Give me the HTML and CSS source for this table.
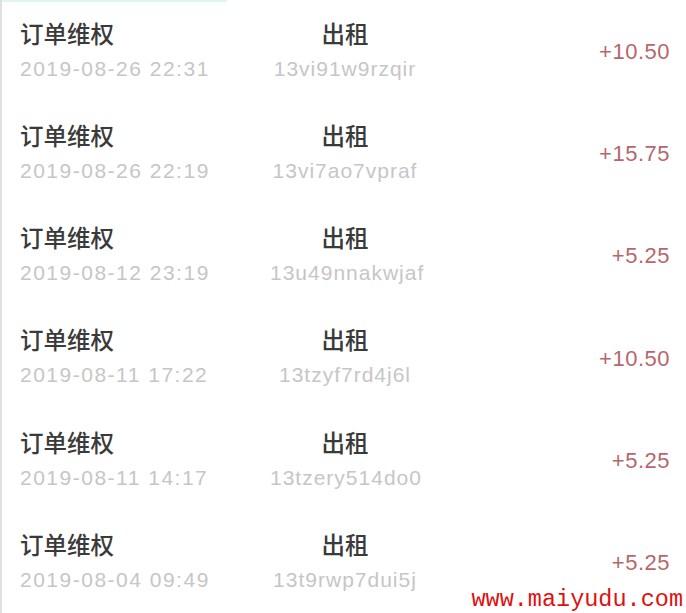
FILE: index.html
```html
<!DOCTYPE html>
<html lang="zh">
<head>
<meta charset="utf-8">
<link rel="stylesheet" href="styles.css">
</head>
<body>
<div class="page">
  <div class="topline"></div>
  <div class="row">
    <div class="left"><div class="title">订单维权</div><div class="date">2019-08-26 22:31</div></div>
    <div class="mid"><div class="title">出租</div><div class="date code">13vi91w9rzqir</div></div>
    <div class="amount">+10.50</div>
  </div>
  <div class="row">
    <div class="left"><div class="title">订单维权</div><div class="date">2019-08-26 22:19</div></div>
    <div class="mid"><div class="title">出租</div><div class="date code">13vi7ao7vpraf</div></div>
    <div class="amount">+15.75</div>
  </div>
  <div class="row">
    <div class="left"><div class="title">订单维权</div><div class="date">2019-08-12 23:19</div></div>
    <div class="mid"><div class="title">出租</div><div class="date code">13u49nnakwjaf</div></div>
    <div class="amount">+5.25</div>
  </div>
  <div class="row">
    <div class="left"><div class="title">订单维权</div><div class="date">2019-08-11 17:22</div></div>
    <div class="mid"><div class="title">出租</div><div class="date code">13tzyf7rd4j6l</div></div>
    <div class="amount">+10.50</div>
  </div>
  <div class="row">
    <div class="left"><div class="title">订单维权</div><div class="date">2019-08-11 14:17</div></div>
    <div class="mid"><div class="title">出租</div><div class="date code">13tzery514do0</div></div>
    <div class="amount">+5.25</div>
  </div>
  <div class="row">
    <div class="left"><div class="title">订单维权</div><div class="date">2019-08-04 09:49</div></div>
    <div class="mid"><div class="title">出租</div><div class="date code">13t9rwp7dui5j</div></div>
    <div class="amount">+5.25</div>
  </div>
  <div class="watermark">www.maiyudu.com</div>
</div>
</body>
</html>
```
FILE: styles.css
```css
html, body {
  margin: 0;
  padding: 0;
  background: #ffffff;
}
body {
  width: 686px;
  height: 613px;
  overflow: hidden;
  font-family: "Liberation Sans", "Noto Sans CJK SC", sans-serif;
}
.page {
  position: relative;
  width: 686px;
  height: 613px;
  box-sizing: border-box;
  border-left: 2px solid #e0e0e0;
}
.topline {
  position: absolute;
  left: 0;
  top: 0;
  width: 225px;
  height: 2px;
  background: #dff5f3;
}
.row {
  height: 102.17px;
  box-sizing: border-box;
  padding: 18px 16px 0 18px;
  display: grid;
  grid-template-columns: 250px 150px 1fr;
  align-items: start;
}
.title {
  font-family: "Noto Sans CJK SC", sans-serif;
  font-size: 23.5px;
  font-weight: 500;
  line-height: 30px;
  color: #3a3a3a;
}
.date {
  margin-top: 6px;
  font-size: 21px;
  line-height: 30px;
  color: #c6c6c6;
  letter-spacing: 1.5px;
  white-space: nowrap;
}
.date.code {
  letter-spacing: 1px;
}
.mid {
  text-align: center;
}
.amount {
  align-self: center;
  margin-top: -16px;
  text-align: right;
  font-size: 22px;
  line-height: 30px;
  color: #b8666b;
  letter-spacing: 0.5px;
}
.watermark {
  position: absolute;
  right: 3px;
  bottom: 0;
  padding: 0 0 0 4px;
  background: #ffffff;
  font-family: "Liberation Mono", monospace;
  font-size: 23.5px;
  line-height: 26px;
  color: #e01010;
}
```
